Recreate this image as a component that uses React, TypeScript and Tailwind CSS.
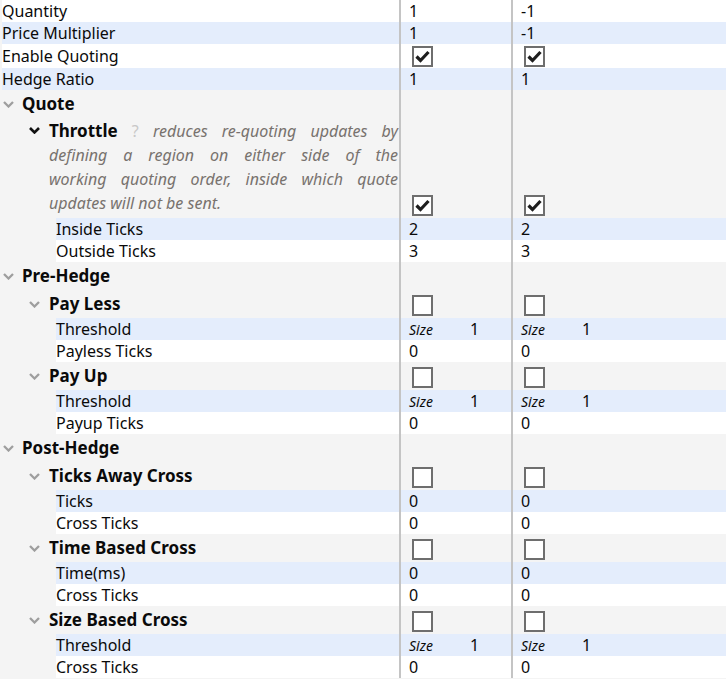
import React from 'react';

type Val =
    | { kind: 'text'; text: string }
    | { kind: 'check'; checked: boolean }
    | { kind: 'size'; n: string }
    | { kind: 'none' };

const txt = (text: string): Val => ({ kind: 'text', text });
const chk = (checked: boolean): Val => ({ kind: 'check', checked });
const size = (n: string): Val => ({ kind: 'size', n });
const none: Val = { kind: 'none' };

const Chevron: React.FC<{ dark?: boolean }> = ({ dark }) => (
    <svg width="11" height="7" viewBox="0 0 11 7" className="shrink-0">
        <path d="M1 1l4.5 4.5L10 1" fill="none" stroke={dark ? '#111' : '#9e9e9e'} strokeWidth={dark ? 2.6 : 2.3} />
    </svg>
);

const Checkbox: React.FC<{ checked: boolean }> = ({ checked }) => (
    <div className="w-[21px] h-[21px] border-2 border-[#6e6e6e] bg-white flex items-center justify-center ml-[3px]">
        {checked && (
            <svg width="15" height="13" viewBox="0 0 15 13">
                <path d="M1.5 6.5l4 4L13.5 2" fill="none" stroke="#1e1e1e" strokeWidth="3.2" />
            </svg>
        )}
    </div>
);

const ValueCell: React.FC<{ v: Val; wide?: boolean; align: 'center' | 'end' }> = ({ v, wide, align }) => (
    <div
        className={`${wide ? 'flex-1' : 'w-[112px]'} shrink-0 h-full border-l-2 border-[#c4c4c4] pl-[8px] flex ${
            align === 'end' ? 'items-end pb-[2px]' : 'items-center'
        }`}
    >
        {v.kind === 'text' && <span>{v.text}</span>}
        {v.kind === 'check' && <Checkbox checked={v.checked} />}
        {v.kind === 'size' && (
            <span className="flex items-center">
                <span className="w-[61px] italic text-[14px]">Size</span>
                <span>{v.n}</span>
            </span>
        )}
    </div>
);

// plain data row (white / blue striped)
const Row: React.FC<{ indent: number; label: string; a: Val; b: Val; blue?: boolean; h?: string }> = ({
    indent,
    label,
    a,
    b,
    blue,
    h = 'h-[22px]',
}) => (
    <div className={`flex ${h}`}>
        <div className={indent === 2 ? 'w-[2px]' : 'w-[56px]'} />
        <div className={`flex flex-1 ${blue ? 'bg-[#e4edfc]' : 'bg-white'}`}>
            <div className={`${indent === 2 ? 'w-[397px]' : 'w-[343px]'} shrink-0 leading-[22px] flex items-center`}>
                {label}
            </div>
            <ValueCell v={a} align="center" />
            <ValueCell v={b} wide align="center" />
        </div>
    </div>
);

const Header: React.FC<{ level: 1 | 2; label: string; a?: Val; b?: Val }> = ({ level, label, a = none, b = none }) => (
    <div className="flex h-[28px]">
        <div className={`w-[399px] shrink-0 flex items-center ${level === 1 ? 'pl-[3px]' : 'pl-[29px]'}`}>
            <Chevron />
            <span className={`font-bold text-[17px] ${level === 1 ? 'ml-[8px]' : 'ml-[9px]'}`}>{label}</span>
        </div>
        <ValueCell v={a} align="end" />
        <ValueCell v={b} wide align="end" />
    </div>
);

const justify = 'block text-justify [text-align-last:justify]';

export default function App() {
    return (
        <div className="w-[726px] h-[679px] overflow-hidden bg-[#f4f4f4] text-[16px] text-[#0a0a0a] font-['Noto_Sans','Open_Sans',sans-serif]">
            <Row indent={2} label="Quantity" a={txt('1')} b={txt('-1')} />
            <Row indent={2} label="Price Multiplier" a={txt('1')} b={txt('-1')} blue />
            <Row indent={2} label="Enable Quoting" a={chk(true)} b={chk(true)} h="h-[24px]" />
            <Row indent={2} label="Hedge Ratio" a={txt('1')} b={txt('1')} blue />

            <Header level={1} label="Quote" />
            <div className="flex h-[100px]">
                <div className="w-[399px] shrink-0 flex pl-[29px] pt-[1px]">
                    <div className="pt-[8px]">
                        <Chevron dark />
                    </div>
                    <div className="ml-[9px] w-[349px] leading-[24px] italic text-[16px] text-[#78726e]">
                        <span className={justify}>
                            <b className="not-italic font-bold text-[17px] text-[#0a0a0a]">Throttle</b>{' '}
                            <span className="not-italic text-[#c8c8c8]">?</span> reduces re-quoting updates by
                        </span>
                        <span className={justify}>defining a region on either side of the</span>
                        <span className={justify}>working quoting order, inside which quote</span>
                        <span className="block">updates will not be sent.</span>
                    </div>
                </div>
                <ValueCell v={chk(true)} align="end" />
                <ValueCell v={chk(true)} wide align="end" />
            </div>
            <Row indent={3} label="Inside Ticks" a={txt('2')} b={txt('2')} blue />
            <Row indent={3} label="Outside Ticks" a={txt('3')} b={txt('3')} />

            <Header level={1} label="Pre-Hedge" />
            <Header level={2} label="Pay Less" a={chk(false)} b={chk(false)} />
            <Row indent={3} label="Threshold" a={size('1')} b={size('1')} blue />
            <Row indent={3} label="Payless Ticks" a={txt('0')} b={txt('0')} />
            <Header level={2} label="Pay Up" a={chk(false)} b={chk(false)} />
            <Row indent={3} label="Threshold" a={size('1')} b={size('1')} blue />
            <Row indent={3} label="Payup Ticks" a={txt('0')} b={txt('0')} />

            <Header level={1} label="Post-Hedge" />
            <Header level={2} label="Ticks Away Cross" a={chk(false)} b={chk(false)} />
            <Row indent={3} label="Ticks" a={txt('0')} b={txt('0')} blue />
            <Row indent={3} label="Cross Ticks" a={txt('0')} b={txt('0')} />
            <Header level={2} label="Time Based Cross" a={chk(false)} b={chk(false)} />
            <Row indent={3} label="Time(ms)" a={txt('0')} b={txt('0')} blue />
            <Row indent={3} label="Cross Ticks" a={txt('0')} b={txt('0')} />
            <Header level={2} label="Size Based Cross" a={chk(false)} b={chk(false)} />
            <Row indent={3} label="Threshold" a={size('1')} b={size('1')} blue />
            <Row indent={3} label="Cross Ticks" a={txt('0')} b={txt('0')} />
        </div>
    );
}
